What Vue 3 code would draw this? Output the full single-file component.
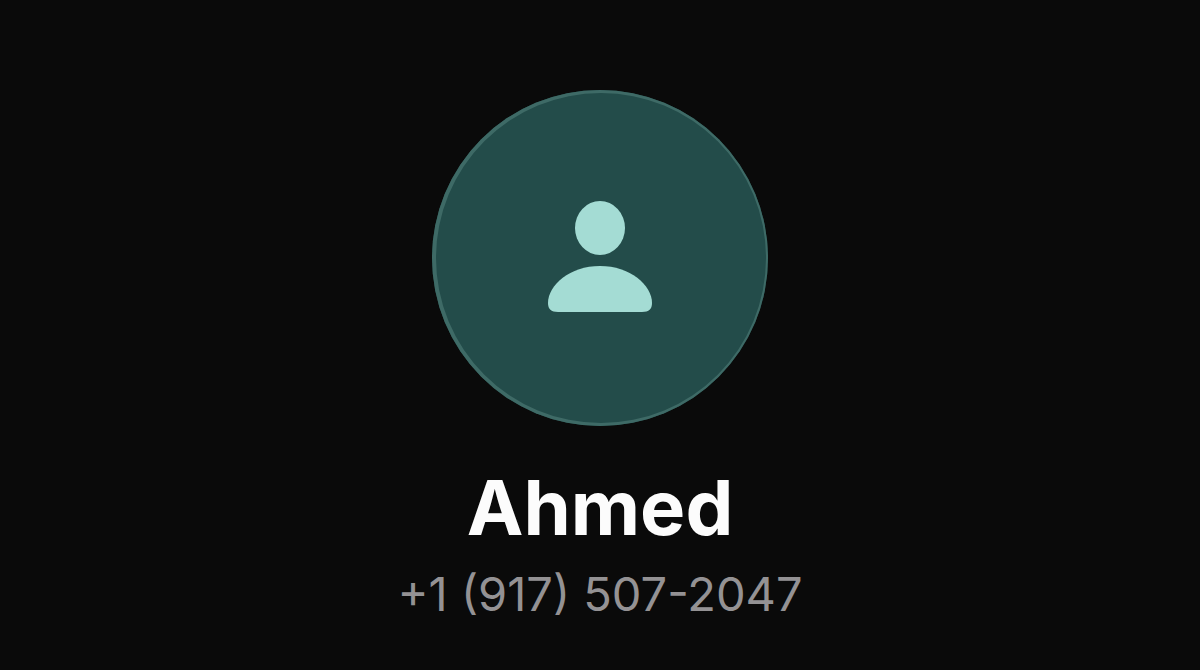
<template>
  <main id="contact-card">
    <div class="avatar">
      <svg class="avatar-icon" viewBox="0 0 104 114" aria-hidden="true">
        <ellipse cx="52" cy="27" rx="25" ry="27" />
        <path d="M0 102C0 84 22 65 52 65C82 65 104 84 104 102C104 108 101 111 94 111H10C3 111 0 108 0 102Z" />
      </svg>
    </div>
    <h1 class="contact-name">{{ contact.name }}</h1>
    <p class="contact-phone">{{ contact.phone }}</p>
  </main>
</template>

<script setup>
import { ref } from 'vue';

const contact = ref({
  name: 'Ahmed',
  phone: '+1 (917) 507-2047'
});
</script>

<style scoped>
#contact-card {
  display: flex;
  flex-direction: column;
  align-items: center;
  box-sizing: border-box;
  min-height: 100vh;
  padding: 90px 24px 40px;
  font-family: Inter, "Liberation Sans", sans-serif;
  text-align: center;
}
.avatar {
  display: flex;
  justify-content: center;
  align-items: center;
  width: 336px;
  height: 336px;
  border-radius: 50%;
  background-color: #234c4a;
  /* rim is a little heavier on the left side */
  box-shadow: inset 1px 0 0 3px #3e6a66;
}
.avatar-icon {
  width: 104px;
  height: 114px;
  fill: #a4dcd4;
}
.contact-name {
  margin: 36px 0 0;
  color: #fcfcfc;
  font-size: 76px;
  font-weight: 700;
  line-height: 90px;
}
.contact-phone {
  margin: 12px 0 0;
  color: #949294;
  font-size: 47px;
  font-weight: 400;
  line-height: 60px;
}
</style>

<style>
body {
  margin: 0;
  background-color: #0a0a0a;
}
</style>
